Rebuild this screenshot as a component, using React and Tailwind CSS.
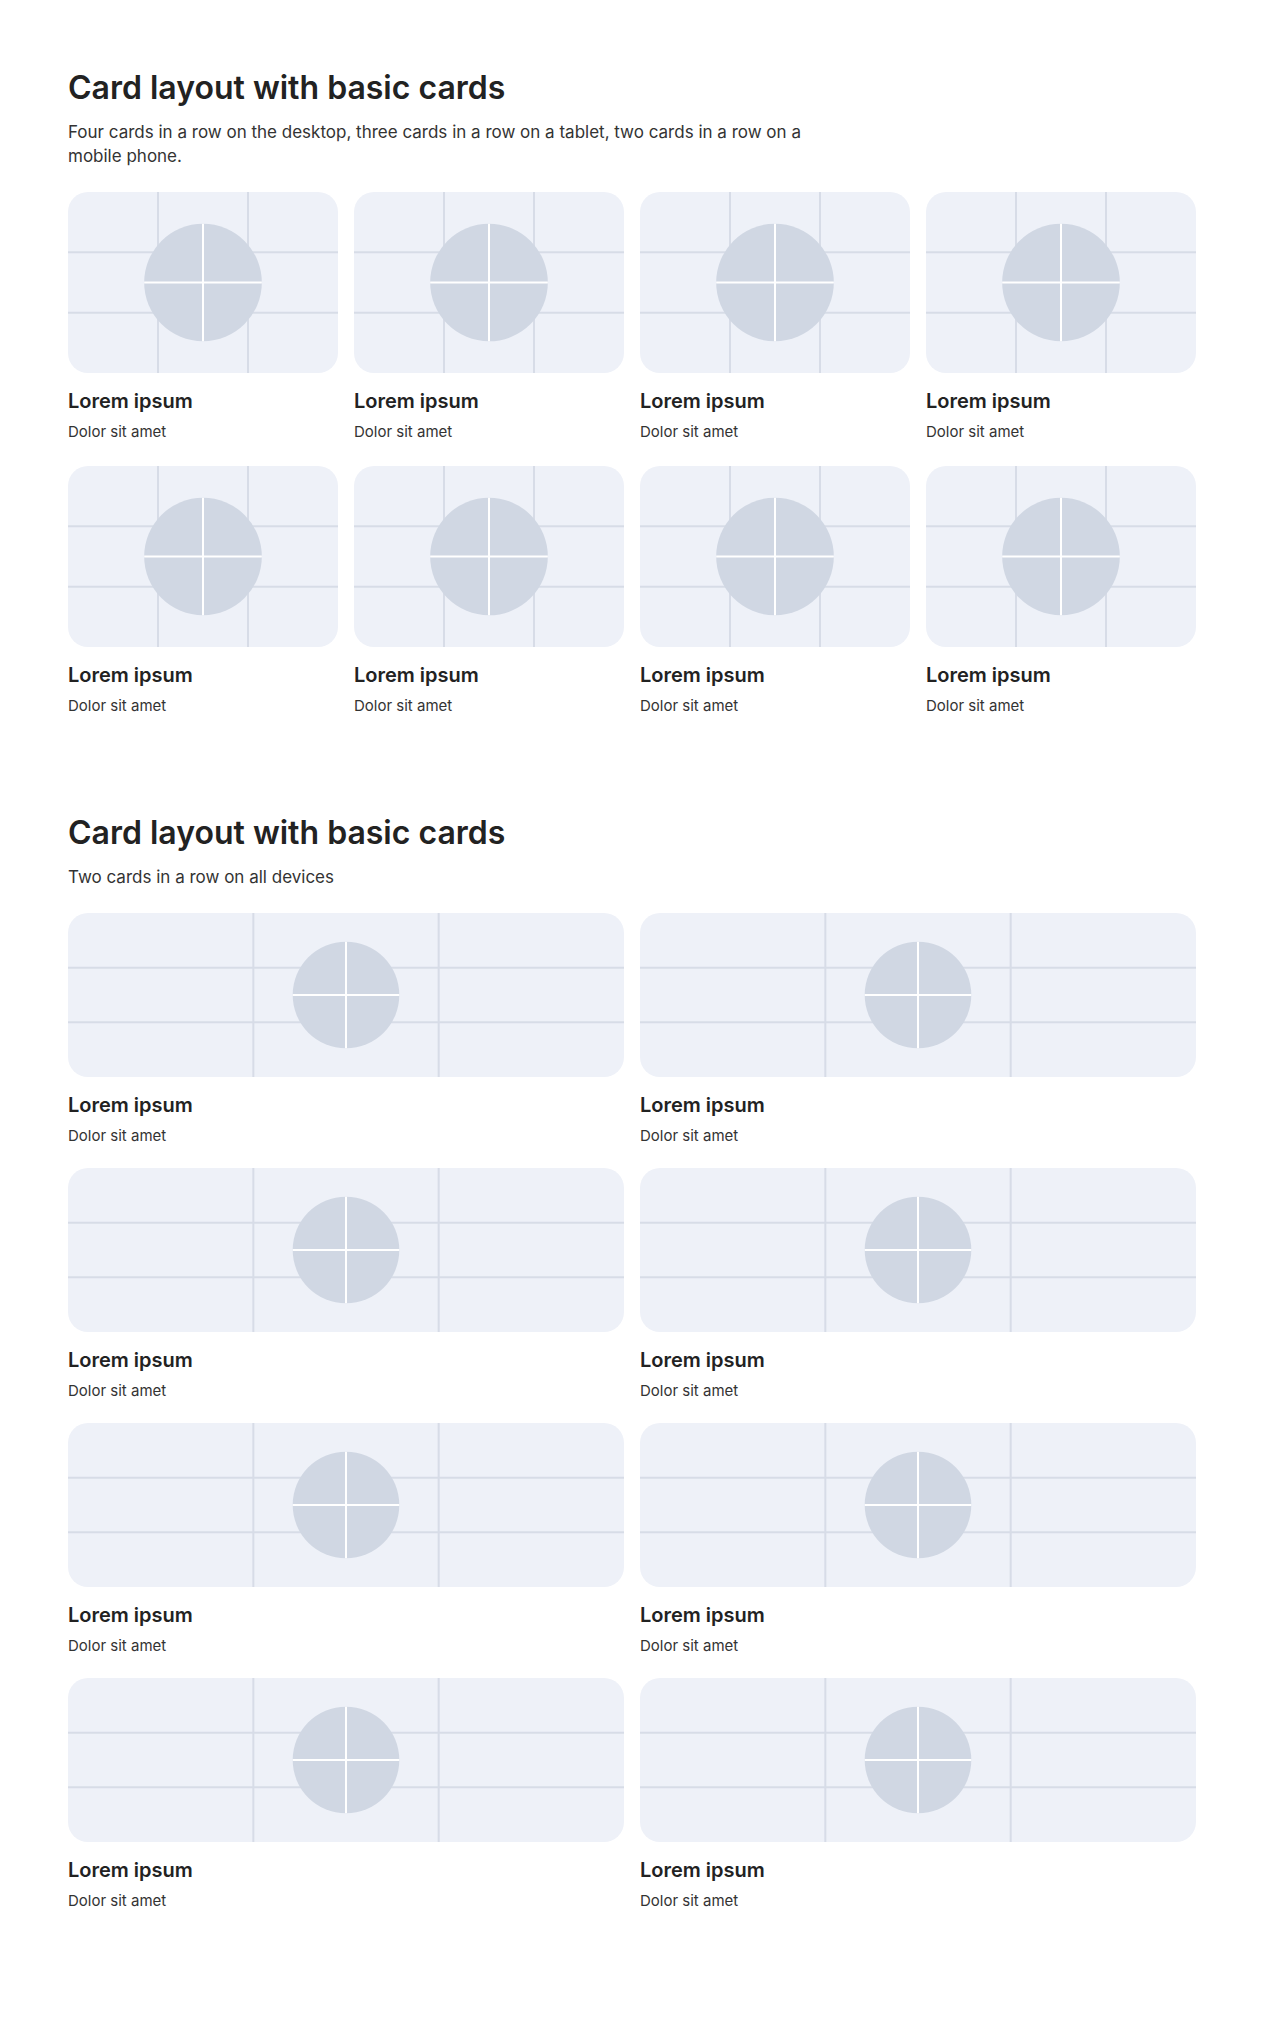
import React from "react";

function Placeholder({ className }) {
  return (
    <div className={"relative overflow-hidden rounded-[20px] bg-[#eef1f8] " + className}>
      <svg className="absolute inset-0 h-full w-full" xmlns="http://www.w3.org/2000/svg">
        <line x1="33.333%" y1="0" x2="33.333%" y2="100%" stroke="#d7dce7" strokeWidth="2" />
        <line x1="66.667%" y1="0" x2="66.667%" y2="100%" stroke="#d7dce7" strokeWidth="2" />
        <line x1="0" y1="33.333%" x2="100%" y2="33.333%" stroke="#d7dce7" strokeWidth="2" />
        <line x1="0" y1="66.667%" x2="100%" y2="66.667%" stroke="#d7dce7" strokeWidth="2" />
        <svg x="0" y="17.5%" width="100%" height="65%" viewBox="0 0 100 100" overflow="visible">
          <circle cx="50" cy="50" r="50" fill="#d0d7e3" />
          <line x1="50" y1="0" x2="50" y2="100" stroke="#ffffff" strokeWidth="2" vectorEffect="non-scaling-stroke" />
          <line x1="0" y1="50" x2="100" y2="50" stroke="#ffffff" strokeWidth="2" vectorEffect="non-scaling-stroke" />
        </svg>
      </svg>
    </div>
  );
}

function Card({ wide }) {
  return (
    <div className="flex flex-col">
      <Placeholder className={wide ? "h-[164px]" : "h-[181px]"} />
      <h3 className="mt-[14px] text-[20px] font-semibold leading-7 text-[#222222]">Lorem ipsum</h3>
      <p className="mt-[7px] text-[15px] leading-5 text-[#333333]">Dolor sit amet</p>
    </div>
  );
}

export default function App() {
  const eight = [0, 1, 2, 3, 4, 5, 6, 7];
  return (
    <div
      className="min-h-[2035px] bg-white text-[#222222]"
      style={{ fontFamily: "Inter, 'Noto Sans', 'Liberation Sans', sans-serif" }}
    >
      <div className="mx-auto max-w-[1128px] pt-[68px] pb-24">
        <section>
          <h2 className="text-[32px] font-semibold leading-10 text-[#222222]">Card layout with basic cards</h2>
          <p className="mt-3 max-w-3xl text-[17px] leading-6 text-[#333333]">
            Four cards in a row on the desktop, three cards in a row on a tablet, two cards in a row on a mobile phone.
          </p>
          <div className="mt-6 grid grid-cols-4 gap-x-4 gap-y-6">
            {eight.map((i) => (
              <Card key={i} />
            ))}
          </div>
        </section>
        <section className="mt-[97px]">
          <h2 className="text-[32px] font-semibold leading-10 text-[#222222]">Card layout with basic cards</h2>
          <p className="mt-3 text-[17px] leading-6 text-[#333333]">Two cards in a row on all devices</p>
          <div className="mt-6 grid grid-cols-2 gap-x-4 gap-y-[22px]">
            {eight.map((i) => (
              <Card key={i} wide />
            ))}
          </div>
        </section>
      </div>
    </div>
  );
}
